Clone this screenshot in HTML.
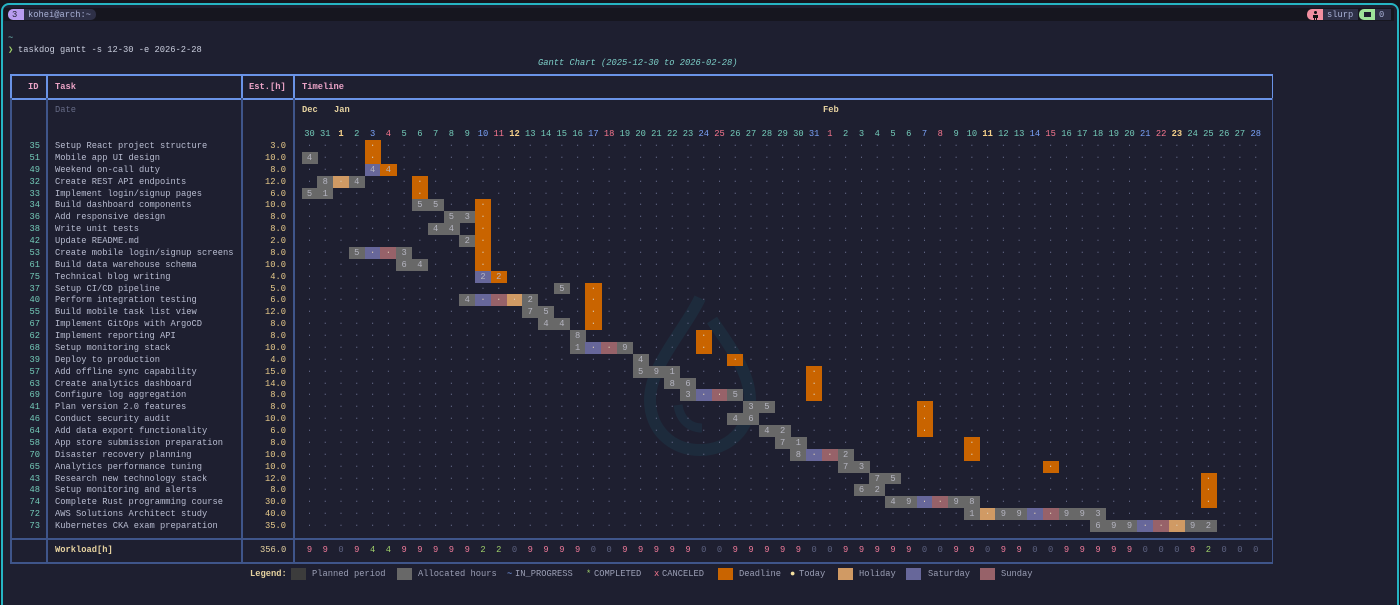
<!DOCTYPE html>
<html><head><meta charset="utf-8">
<style>
html,body{margin:0;padding:0;width:1400px;height:596px;overflow:hidden;background:#15161e;}
#frame{position:absolute;left:1px;top:3px;width:1394px;height:600px;border:2px solid #26b5c4;border-bottom:none;border-radius:8px 8px 0 0;background:#1e1f30;overflow:hidden;}
.t{position:absolute;font-family:"Liberation Mono","DejaVu Sans Mono",monospace;font-size:8.75px;line-height:12px;white-space:pre;color:#c0c4d8;}
.b{font-weight:bold;}
.c{position:absolute;height:12px;}
.ln{position:absolute;background:#4a5f95;}
</style></head><body>
<div id="frame"></div>
<div id="root" style="position:absolute;left:0;top:0;width:1400px;height:596px;"></div>
<script>
var R=document.getElementById('root');
function T(x,y,s,col,extra){var d=document.createElement('div');d.className='t'+(extra||'');d.style.left=x+'px';d.style.top=(y-6)+'px';d.style.color=col||'#c0c4d8';d.textContent=s;R.appendChild(d);return d;}
function B(x,y,w,h,bg,cls){var d=document.createElement('div');d.className=cls||'c';d.style.left=x+'px';d.style.top=y+'px';d.style.width=w+'px';d.style.height=h+'px';d.style.background=bg;R.appendChild(d);return d;}
// watermark
R.insertAdjacentHTML('beforeend','<svg style="position:absolute;left:630px;top:290px" width="140" height="170"><path d="M70 8 C55 40 20 75 20 110 C20 140 42 160 70 160 C98 160 120 140 120 110 C120 80 95 50 82 30" fill="none" stroke="#1c4a5e" stroke-opacity="0.28" stroke-width="12"/><path d="M48 115 C50 130 60 138 72 138" fill="none" stroke="#1c4a5e" stroke-opacity="0.25" stroke-width="9"/></svg>');
// status bar
B(4,8,1390,13,'#16161f','c');
B(8,9,16,11,'#b89cf0','c').style.borderRadius='5px 0 0 5px';
T(12,15,'3','#1e1f30');
B(24,9,72,11,'#2e3047','c').style.borderRadius='0 5px 5px 0';
T(28,15,'kohei@arch:~','#a9b1d6');
var p=B(1307,9,16,11,'#f28fa0','c');p.style.borderRadius='5px 0 0 5px';
B(1313.5,11,3,3,'#111','c').style.borderRadius='50%';
B(1312.5,14.5,5,3.5,'#111','c');B(1313.5,18,1.2,2,'#111','c');B(1315.5,18,1.2,2,'#111','c');
B(1323,9,35,11,'#2e3047','c');T(1327,15,'slurp','#a9b1d6');
var g=B(1359,9,16,11,'#9fe59a','c');g.style.borderRadius='5px 0 0 5px';
B(1364,12,7,5,'#1e1f30','c');
B(1375,9,16,11,'#2e3047','c');T(1379,15,'0','#a9b1d6');
// prompt
T(8,38,'~','#73c0b8');
T(8,50,'\u276F','#9ece6a');T(18,50,'taskdog gantt -s 12-30 -e 2026-2-28','#c8ccdc');
T(538,63,'Gantt Chart (2025-12-30 to 2026-02-28)','#7dcfc8').style.fontStyle='italic';
// table lines
var L2='#3f558a';
B(10,74,1263,1.5,'#6a93e6','ln');B(10,98,1263,1.5,'#6a93e6','ln');
B(10,74,1.5,24,'#6a93e6','ln');B(1271.5,74,1.5,24,'#6a93e6','ln');
B(10,98,1.5,466,L2,'ln');B(1271.5,98,1.5,466,L2,'ln');
[46,241,293].forEach(function(x){B(x,74,1.5,24,'#6a93e6','ln');B(x,98,1.5,466,L2,'ln');});
B(10,538,1263,1.5,L2,'ln');B(10,562,1263,1.5,L2,'ln');
var pk='#eaa3c6';
T(28,87,'ID',pk,' b');T(55,87,'Task',pk,' b');T(249,87,'Est.[h]',pk,' b');T(302,87,'Timeline',pk,' b');
T(55,110,'Date','#656a85');
var yl='#e6d2a0';
T(302,110,'Dec',yl,' b');T(334,110,'Jan',yl,' b');T(823,110,'Feb',yl,' b');
var CW=15.77;function cx(i){return 309.5+i*CW;}
var hol={2:1,13:1,43:1,55:1};
function dayType(i){var dow=(2+i)%7; if(hol[i])return 'h'; if(dow==6)return 's'; if(dow==0)return 'u'; return 'w';}
function dayNum(i){if(i<2)return 30+i;if(i<33)return i-1;return i-32;}
var dc={w:'#73cab8',s:'#7aa2f7',u:'#f7768e',h:'#f5d08a'};
for(var i=0;i<61;i++){var n=''+dayNum(i);T(cx(i)-n.length*2.63,134,n,dc[dayType(i)],dayType(i)=='h'?' b':'');}
var rows=[
[35,"Setup React project structure","3.0",[[4,'d']]],
[51,"Mobile app UI design","10.0",[[0,'a','4'],[4,'d']]],
[49,"Weekend on-call duty","8.0",[[4,'s','4'],[5,'d','4']]],
[32,"Create REST API endpoints","12.0",[[1,'a','8'],[2,'h'],[3,'a','4'],[7,'d']]],
[33,"Implement login/signup pages","6.0",[[0,'a','5'],[1,'a','1'],[7,'d']]],
[34,"Build dashboard components","10.0",[[7,'a','5'],[8,'a','5'],[11,'d']]],
[36,"Add responsive design","8.0",[[9,'a','5'],[10,'a','3'],[11,'d']]],
[38,"Write unit tests","8.0",[[8,'a','4'],[9,'a','4'],[11,'d']]],
[42,"Update README.md","2.0",[[10,'a','2'],[11,'d']]],
[53,"Create mobile login/signup screens","8.0",[[3,'a','5'],[4,'s'],[5,'u'],[6,'a','3'],[11,'d']]],
[61,"Build data warehouse schema","10.0",[[6,'a','6'],[7,'a','4'],[11,'d']]],
[75,"Technical blog writing","4.0",[[11,'s','2'],[12,'d','2']]],
[37,"Setup CI/CD pipeline","5.0",[[16,'a','5'],[18,'d']]],
[40,"Perform integration testing","6.0",[[10,'a','4'],[11,'s'],[12,'u'],[13,'h'],[14,'a','2'],[18,'d']]],
[55,"Build mobile task list view","12.0",[[14,'a','7'],[15,'a','5'],[18,'d']]],
[67,"Implement GitOps with ArgoCD","8.0",[[15,'a','4'],[16,'a','4'],[18,'d']]],
[62,"Implement reporting API","8.0",[[17,'a','8'],[25,'d']]],
[68,"Setup monitoring stack","10.0",[[17,'a','1'],[18,'s'],[19,'u'],[20,'a','9'],[25,'d']]],
[39,"Deploy to production","4.0",[[21,'a','4'],[27,'d']]],
[57,"Add offline sync capability","15.0",[[21,'a','5'],[22,'a','9'],[23,'a','1'],[32,'d']]],
[63,"Create analytics dashboard","14.0",[[23,'a','8'],[24,'a','6'],[32,'d']]],
[69,"Configure log aggregation","8.0",[[24,'a','3'],[25,'s'],[26,'u'],[27,'a','5'],[32,'d']]],
[41,"Plan version 2.0 features","8.0",[[28,'a','3'],[29,'a','5'],[39,'d']]],
[46,"Conduct security audit","10.0",[[27,'a','4'],[28,'a','6'],[39,'d']]],
[64,"Add data export functionality","6.0",[[29,'a','4'],[30,'a','2'],[39,'d']]],
[58,"App store submission preparation","8.0",[[30,'a','7'],[31,'a','1'],[42,'d']]],
[70,"Disaster recovery planning","10.0",[[31,'a','8'],[32,'s'],[33,'u'],[34,'a','2'],[42,'d']]],
[65,"Analytics performance tuning","10.0",[[34,'a','7'],[35,'a','3'],[47,'d']]],
[43,"Research new technology stack","12.0",[[36,'a','7'],[37,'a','5'],[57,'d']]],
[48,"Setup monitoring and alerts","8.0",[[35,'a','6'],[36,'a','2'],[57,'d']]],
[74,"Complete Rust programming course","30.0",[[37,'a','4'],[38,'a','9'],[39,'s'],[40,'u'],[41,'a','9'],[42,'a','8'],[57,'d']]],
[72,"AWS Solutions Architect study","40.0",[[42,'a','1'],[43,'h'],[44,'a','9'],[45,'a','9'],[46,'s'],[47,'u'],[48,'a','9'],[49,'a','9'],[50,'a','3']]],
[73,"Kubernetes CKA exam preparation","35.0",[[50,'a','6'],[51,'a','9'],[52,'a','9'],[53,'s'],[54,'u'],[55,'h'],[56,'a','9'],[57,'a','2']]]
];
var bgc={a:'#686868',d:'#c96400',h:'#d09a64',s:'#67679a',u:'#976269'};
rows.forEach(function(r,k){
 var y=146+k*11.875;
 var id=''+r[0];T(40-id.length*5.26,y,id,'#73cab8');
 T(55,y,r[1],'#b8bcd0');
 T(286-r[2].length*5.26,y,r[2],'#e6c98a');
 var m={};r[3].forEach(function(c){m[c[0]]=c;});
 for(var i=0;i<61;i++){
  var c=m[i];
  if(c){B(cx(i)-CW/2,y-6,CW+0.3,11.9,bgc[c[1]],'c');}
  var s=c&&c[2]?c[2]:'\u00b7';
  var col=c?(c[2]?'#b4b4c0':'#d8c8b0'):'#5d6280';
  T(cx(i)-2.63,y,s,col);
 }
});
T(55,550,'Workload[h]','#e6d2a0',' b');T(260,550,'356.0','#e6d2a0');
var wl='9 9 0 9 4 4 9 9 9 9 9 2 2 0 9 9 9 9 0 0 9 9 9 9 9 0 0 9 9 9 9 9 0 0 9 9 9 9 9 0 0 9 9 0 9 9 0 0 9 9 9 9 9 0 0 0 9 2 0 0 0'.split(' ');
wl.forEach(function(v,i){var col=v=='9'?'#f07a9a':(v=='0'?'#5d6280':'#9ece6a');T(cx(i)-2.63,550,v,col);});
var ly=574;
T(250,ly,'Legend:','#e6d2a0',' b');
B(291,568,15,12,'#3c3c3c','c');T(312,ly,'Planned period','#9a9eb4');
B(397,568,15,12,'#686868','c');T(418,ly,'Allocated hours','#9a9eb4');
T(507,ly,'~','#7aa2f7');T(515,ly,'IN_PROGRESS','#9a9eb4');
T(586,ly,'*','#9ece6a');T(594,ly,'COMPLETED','#9a9eb4');
T(654,ly,'x','#f7768e');T(662,ly,'CANCELED','#9a9eb4');
B(718,568,15,12,'#c96400','c');T(739,ly,'Deadline','#9a9eb4');
T(790,ly,'\u25CF','#f5e0a0');T(799,ly,'Today','#9a9eb4');
B(838,568,15,12,'#d09a64','c');T(859,ly,'Holiday','#9a9eb4');
B(906,568,15,12,'#67679a','c');T(928,ly,'Saturday','#9a9eb4');
B(980,568,15,12,'#976269','c');T(1001,ly,'Sunday','#9a9eb4');
</script>
</body></html>
